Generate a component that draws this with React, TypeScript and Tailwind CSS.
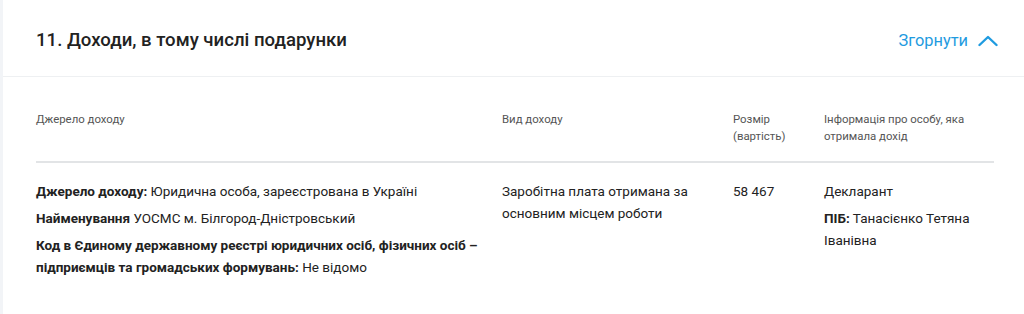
const cols = "grid grid-cols-[466px_231px_91px_170px]";

function Chevron() {
  return (
    <svg width="20" height="12" viewBox="0 0 20 12" fill="none" stroke="currentColor" strokeWidth="2.4" strokeLinecap="round" strokeLinejoin="round">
      <path d="M1.5 10 L10 2 L18.5 10" />
    </svg>
  );
}

export default function App() {
  return (
    <div className="min-h-screen bg-[#f2f4f7] pl-[3px] pb-[3px] font-['Roboto',sans-serif] text-[#222]">
      <section className="bg-white">
        <header className="flex h-[77px] items-center justify-between border-b border-[#eef0f2] pt-[6px] pl-[33px] pr-[26px]">
          <h2 className="text-[18.6px] font-medium text-[#222]">11. Доходи, в тому числі подарунки</h2>
          <button className="flex items-center gap-[10px] text-[16.4px] text-[#1f9be0]">
            Згорнути
            <Chevron />
          </button>
        </header>

        <div className="ml-[33px] mr-[30px] pb-[37px]">
          <div className={`${cols} border-b-2 border-[#e2e4e6] pt-[34px] pb-[16px] text-[11.4px] leading-[17px] text-[#555]`}>
            <div>Джерело доходу</div>
            <div>Вид доходу</div>
            <div className="pr-2">Розмір (вартість)</div>
            <div>Інформація про особу, яка отримала дохід</div>
          </div>

          <div className={`${cols} pt-[17px] text-[13.5px] leading-[22px]`}>
            <div className="flex flex-col gap-[5px] pr-4">
              <p>
                <b className="font-bold">Джерело доходу:</b> Юридична особа, зареєстрована в Україні
              </p>
              <p>
                <b className="font-bold">Найменування</b> УОСМС м. Білгород-Дністровський
              </p>
              <p>
                <b className="font-bold">
                  Код в Єдиному державному реєстрі юридичних осіб, фізичних осіб – підприємців та громадських формувань:
                </b>{" "}
                Не відомо
              </p>
            </div>
            <div className="pr-6">Заробітна плата отримана за основним місцем роботи</div>
            <div>58 467</div>
            <div className="flex flex-col gap-[5px]">
              <p>Декларант</p>
              <p>
                <b className="font-bold">ПІБ:</b> Танасієнко Тетяна Іванівна
              </p>
            </div>
          </div>
        </div>
      </section>
    </div>
  );
}
